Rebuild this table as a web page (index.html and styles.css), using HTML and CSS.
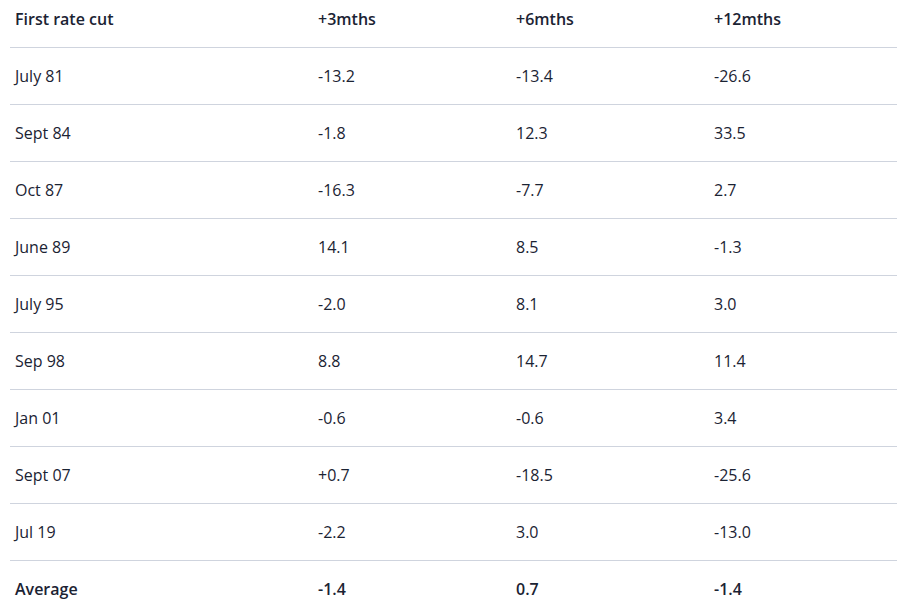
FILE: index.html
```html
<!DOCTYPE html>
<html>
<head>
<meta charset="utf-8">
<link rel="stylesheet" href="styles.css">
</head>
<body>
<table class="cuts">
  <colgroup>
    <col class="c1"><col class="c2"><col class="c3"><col class="c4">
  </colgroup>
  <thead>
    <tr><th>First rate cut</th><th>+3mths</th><th>+6mths</th><th>+12mths</th></tr>
  </thead>
  <tbody>
    <tr><td>July 81</td><td>-13.2</td><td>-13.4</td><td>-26.6</td></tr>
    <tr><td>Sept 84</td><td>-1.8</td><td>12.3</td><td>33.5</td></tr>
    <tr><td>Oct 87</td><td>-16.3</td><td>-7.7</td><td>2.7</td></tr>
    <tr><td>June 89</td><td>14.1</td><td>8.5</td><td>-1.3</td></tr>
    <tr><td>July 95</td><td>-2.0</td><td>8.1</td><td>3.0</td></tr>
    <tr><td>Sep 98</td><td>8.8</td><td>14.7</td><td>11.4</td></tr>
    <tr><td>Jan 01</td><td>-0.6</td><td>-0.6</td><td>3.4</td></tr>
    <tr><td>Sept 07</td><td>+0.7</td><td>-18.5</td><td>-25.6</td></tr>
    <tr><td>Jul 19</td><td>-2.2</td><td>3.0</td><td>-13.0</td></tr>
    <tr class="avg"><td>Average</td><td>-1.4</td><td>0.7</td><td>-1.4</td></tr>
  </tbody>
</table>
</body>
</html>
```
FILE: styles.css
```css
html, body {
  margin: 0;
  padding: 0;
  background: #ffffff;
}
body {
  font-family: "Open Sans", "Noto Sans", sans-serif;
  font-size: 16px;
  color: #1b2333;
  padding: 0 10px;
}
.cuts {
  border-collapse: collapse;
  width: 887px;
  table-layout: fixed;
}
.c1 { width: 303px; }
.c2 { width: 198px; }
.c3 { width: 198px; }
.c4 { width: 188px; }
.cuts th {
  font-weight: 600;
  text-align: left;
  padding: 9px 5px 17px;
  line-height: 21px;
  border-bottom: 1px solid #cfd4de;
}
.cuts td {
  text-align: left;
  padding: 18px 5px 17px;
  line-height: 21px;
  border-bottom: 1px solid #cfd4de;
}
.cuts tr.avg td {
  font-weight: 600;
  border-bottom: none;
}
```
